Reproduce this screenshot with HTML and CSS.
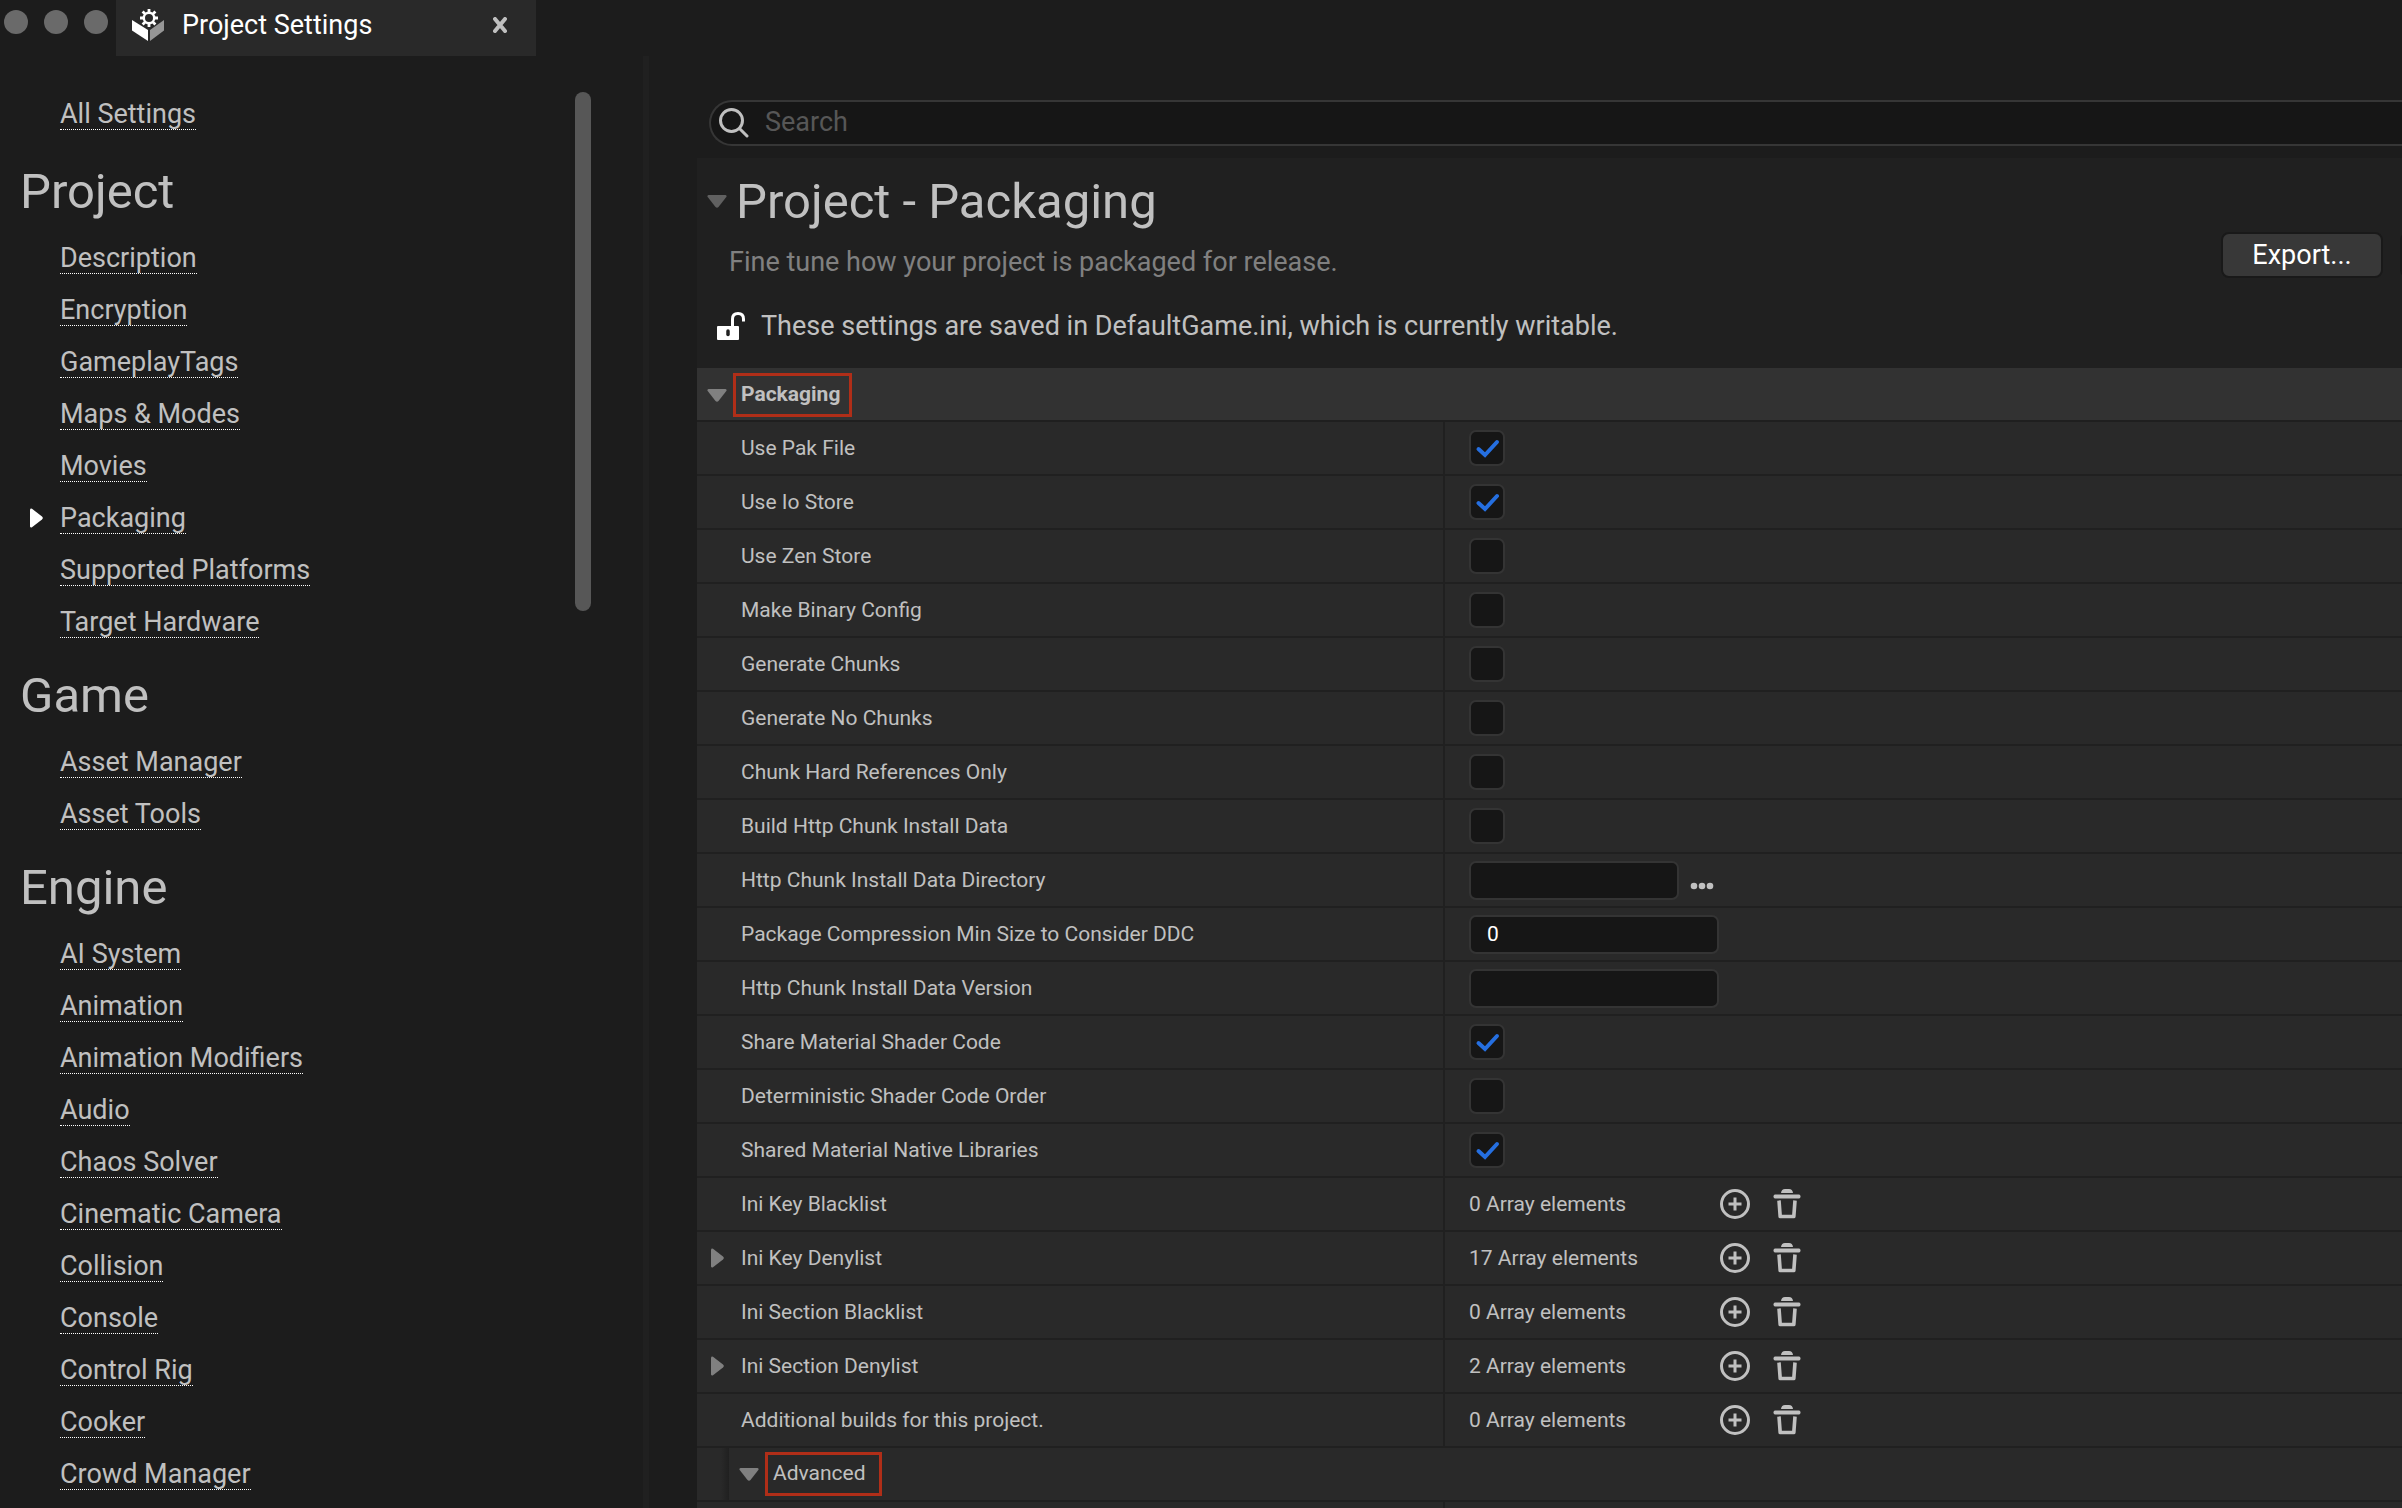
FILE: index.html
```html
<!DOCTYPE html>
<html lang="en">
<head>
<meta charset="utf-8">
<title>Project Settings</title>
<link rel="stylesheet" href="styles.css">
</head>
<body>
<svg class="defs" aria-hidden="true">
  <symbol id="down" viewBox="0 0 20 13"><path d="M1.500 0h17q1.700 0.500 0.800 2l-7.800 10q-1.500 1.600-3 0l-7.800-10q-0.900-1.500 0.800-2z"/></symbol>
  <symbol id="right" viewBox="0 0 13 20"><path d="M0 1.500v17q0.500 1.700 2 0.800l10-7.800q1.600-1.500 0-3l-10-7.800q-1.500-0.900-2 0.800z"/></symbol>
  <symbol id="plus" viewBox="0 0 30 30"><g fill="none" stroke="currentColor" stroke-width="3"><circle cx="15" cy="15" r="13.500"/><path d="M15 8.500v13M8.500 15h13"/></g></symbol>
  <symbol id="trash" viewBox="0 0 30 30"><path d="M9 4q0.500-4 4-4h4q3.500 0 4 4z"/><path d="M3 5.500h24q1.500 0 1.500 2t-1.500 2h-24q-1.500 0-1.500-2t1.500-2z"/><path d="M7 11.500l1.200 16h13.600l1.200-16" fill="none" stroke="currentColor" stroke-width="3.600" stroke-linejoin="round"/></symbol>
</svg>

<header class="titlebar">
  <div class="lights"><span></span><span></span><span></span></div>
  <div class="tab">
    <svg class="tab-icon" viewBox="0 0 32 40">
      <path d="M0 15l16 10v11l-16-10.500z" fill="#fff"/>
      <path d="M32 15l-14 10v11l14-10.500z" fill="#969696"/>
      <circle cx="17" cy="13" r="5.200" fill="none" stroke="#fff" stroke-width="2.400"/>
      <g stroke="#fff" stroke-width="2.800"><path d="M17 4v3.500M17 18.500v3.500M8 13h3.500M22.500 13h3.500M10.600 6.600l2.500 2.500M20.900 16.900l2.500 2.500M10.600 19.400l2.500-2.500M20.900 9.100l2.500-2.500"/></g>
    </svg>
    <span class="tab-title">Project Settings</span>
    <button class="close" aria-label="Close tab"><svg viewBox="0 0 14 16"><path d="M2 2l10 12M12 2l-10 12"/></svg></button>
  </div>
</header>

<div class="window">
  <nav class="sidebar" aria-label="Settings sections">
    <div class="sections">
      <ul class="all"><li><a href="#">All Settings</a></li></ul>
      <h2>Project</h2>
      <ul>
        <li><a href="#">Description</a></li>
        <li><a href="#">Encryption</a></li>
        <li><a href="#">GameplayTags</a></li>
        <li><a href="#">Maps &amp; Modes</a></li>
        <li><a href="#">Movies</a></li>
        <li class="current"><svg class="marker"><use href="#right"/></svg><a href="#" aria-current="page">Packaging</a></li>
        <li><a href="#">Supported Platforms</a></li>
        <li><a href="#">Target Hardware</a></li>
      </ul>
      <h2>Game</h2>
      <ul>
        <li><a href="#">Asset Manager</a></li>
        <li><a href="#">Asset Tools</a></li>
      </ul>
      <h2>Engine</h2>
      <ul>
        <li><a href="#">AI System</a></li>
        <li><a href="#">Animation</a></li>
        <li><a href="#">Animation Modifiers</a></li>
        <li><a href="#">Audio</a></li>
        <li><a href="#">Chaos Solver</a></li>
        <li><a href="#">Cinematic Camera</a></li>
        <li><a href="#">Collision</a></li>
        <li><a href="#">Console</a></li>
        <li><a href="#">Control Rig</a></li>
        <li><a href="#">Cooker</a></li>
        <li><a href="#">Crowd Manager</a></li>
      </ul>
    </div>
    <div class="scrollbar"><div class="thumb"></div></div>
  </nav>

  <main class="content">
    <label class="search">
      <svg viewBox="0 0 30 30"><circle cx="12.500" cy="12.500" r="11"/><path d="M20.500 20.500l7.500 7.500"/></svg>
      <input type="search" placeholder="Search" aria-label="Search">
    </label>

    <section class="panel">
      <div class="intro">
        <div class="heading">
          <h1><svg class="arrow dim"><use href="#down"/></svg>Project - Packaging</h1>
          <p class="summary">Fine tune how your project is packaged for release.</p>
        </div>
        <div class="actions"><button class="btn">Export...</button><button class="btn" aria-label="Import"></button></div>
      </div>
      <p class="status">
        <svg class="lock" viewBox="0 0 28 28"><path d="M1 14h20q1 0 1 1v12q0 1-1 1h-20q-1 0-1-1v-12q0-1 1-1z" fill="#fff"/><path d="M11 19v3.500" stroke="#202020" stroke-width="3.500" stroke-linecap="round"/><path d="M15.500 15v-8q0-5.500 5.500-5.500t5.500 5.500v2.500" fill="none" stroke="#fff" stroke-width="3"/></svg>
        These settings are saved in DefaultGame.ini, which is currently writable.
      </p>

      <h3 class="group"><svg class="arrow"><use href="#down"/></svg><span class="mark">Packaging</span></h3>
      <div class="row"><div class="name"><label for="f1">Use Pak File</label></div><div class="value"><input type="checkbox" id="f1" checked></div></div>
      <div class="row"><div class="name"><label for="f2">Use Io Store</label></div><div class="value"><input type="checkbox" id="f2" checked></div></div>
      <div class="row"><div class="name"><label for="f3">Use Zen Store</label></div><div class="value"><input type="checkbox" id="f3"></div></div>
      <div class="row"><div class="name"><label for="f4">Make Binary Config</label></div><div class="value"><input type="checkbox" id="f4"></div></div>
      <div class="row"><div class="name"><label for="f5">Generate Chunks</label></div><div class="value"><input type="checkbox" id="f5"></div></div>
      <div class="row"><div class="name"><label for="f6">Generate No Chunks</label></div><div class="value"><input type="checkbox" id="f6"></div></div>
      <div class="row"><div class="name"><label for="f7">Chunk Hard References Only</label></div><div class="value"><input type="checkbox" id="f7"></div></div>
      <div class="row"><div class="name"><label for="f8">Build Http Chunk Install Data</label></div><div class="value"><input type="checkbox" id="f8"></div></div>
      <div class="row"><div class="name"><label for="f9">Http Chunk Install Data Directory</label></div><div class="value"><input type="text" class="short" id="f9"><button class="browse" aria-label="Browse"><svg viewBox="0 0 24 8"><circle cx="4" cy="4" r="3.300"/><circle cx="12" cy="4" r="3.300"/><circle cx="20" cy="4" r="3.300"/></svg></button></div></div>
      <div class="row"><div class="name"><label for="f10">Package Compression Min Size to Consider DDC</label></div><div class="value"><input type="text" id="f10" value="0"></div></div>
      <div class="row"><div class="name"><label for="f11">Http Chunk Install Data Version</label></div><div class="value"><input type="text" id="f11"></div></div>
      <div class="row"><div class="name"><label for="f12">Share Material Shader Code</label></div><div class="value"><input type="checkbox" id="f12" checked></div></div>
      <div class="row"><div class="name"><label for="f13">Deterministic Shader Code Order</label></div><div class="value"><input type="checkbox" id="f13"></div></div>
      <div class="row"><div class="name"><label for="f14">Shared Material Native Libraries</label></div><div class="value"><input type="checkbox" id="f14" checked></div></div>
      <div class="row"><div class="name">Ini Key Blacklist</div><div class="value"><span class="count">0 Array elements</span><button class="tool" aria-label="Add element"><svg><use href="#plus"/></svg></button><button class="tool" aria-label="Remove all"><svg><use href="#trash"/></svg></button></div></div>
      <div class="row"><div class="name"><svg class="expand"><use href="#right"/></svg>Ini Key Denylist</div><div class="value"><span class="count">17 Array elements</span><button class="tool" aria-label="Add element"><svg><use href="#plus"/></svg></button><button class="tool" aria-label="Remove all"><svg><use href="#trash"/></svg></button></div></div>
      <div class="row"><div class="name">Ini Section Blacklist</div><div class="value"><span class="count">0 Array elements</span><button class="tool" aria-label="Add element"><svg><use href="#plus"/></svg></button><button class="tool" aria-label="Remove all"><svg><use href="#trash"/></svg></button></div></div>
      <div class="row"><div class="name"><svg class="expand"><use href="#right"/></svg>Ini Section Denylist</div><div class="value"><span class="count">2 Array elements</span><button class="tool" aria-label="Add element"><svg><use href="#plus"/></svg></button><button class="tool" aria-label="Remove all"><svg><use href="#trash"/></svg></button></div></div>
      <div class="row"><div class="name">Additional builds for this project.</div><div class="value"><span class="count">0 Array elements</span><button class="tool" aria-label="Add element"><svg><use href="#plus"/></svg></button><button class="tool" aria-label="Remove all"><svg><use href="#trash"/></svg></button></div></div>
      <h4 class="subgroup"><svg class="arrow"><use href="#down"/></svg><span class="mark">Advanced</span></h4>
      <div class="row"><div class="name"></div><div class="value"></div></div>
    </section>
  </main>
</div>
</body>
</html>
```
FILE: styles.css
```css
* { box-sizing: border-box; margin: 0; padding: 0; }
html, body { height: 100%; }
body {
  display: flex;
  flex-direction: column;
  overflow: hidden;
  background: #1c1c1c;
  color: #c0c0c0;
  font-family: Roboto, "Liberation Sans", sans-serif;
  font-size: 21px;
}
.defs { display: none; }
button { border: 0; background: none; color: inherit; font: inherit; }
svg { display: block; flex: none; fill: currentColor; }
ul { list-style: none; }

.titlebar { display: flex; flex: none; height: 56px; }
.lights { display: flex; gap: 16px; padding: 10px 8px 0 4px; }
.lights span { width: 24px; height: 24px; border-radius: 50%; background: #6a6a6a; }
.tab { display: flex; align-items: center; width: 420px; padding: 0 29px 6px 16px; background: #292929; }
.tab-icon { width: 32px; height: 40px; }
.tab-title { flex: 1; padding-left: 18px; color: #fff; font-size: 27px; }
.close svg { width: 14px; height: 16px; fill: none; stroke: #c0c0c0; stroke-width: 4; stroke-linecap: round; }

.window { display: flex; flex: 1; min-height: 0; }
.sidebar { display: flex; flex: none; width: 649px; border-right: 6px solid #202020; overflow: hidden; }
.sections { flex: 1; padding-top: 32px; }
.sections li { position: relative; height: 52px; padding: 8px 0 0 60px; }
.sections a {
  display: inline-block;
  padding-top: 4px;
  border-bottom: 1px dotted #fff;
  color: #c0c0c0;
  font-size: 27px;
  line-height: 29px;
  text-decoration: none;
}
.sections h2 { height: 88px; padding: 20px 0 0 20px; font-size: 49px; font-weight: 400; line-height: 56px; }
.all { margin-bottom: 4px; }
.marker { position: absolute; left: 30px; top: 16px; width: 13px; height: 20px; color: #fff; }
.scrollbar { flex: none; width: 68px; padding-top: 36px; }
.thumb { width: 16px; height: 519px; border-radius: 8px; background: #575757; }

.content { display: flex; flex: 1; flex-direction: column; min-width: 0; padding: 44px 0 0 48px; overflow: hidden; }
.search {
  display: flex;
  flex: none;
  align-items: center;
  gap: 16px;
  height: 46px;
  margin-left: 12px;
  padding-left: 8px;
  border: 2px solid #363636;
  border-right: 0;
  border-radius: 23px 0 0 23px;
  background: #161616;
}
.search svg { width: 30px; height: 30px; fill: none; stroke: #c0c0c0; stroke-width: 3; stroke-linecap: round; }
.search input { flex: 1; padding-bottom: 3px; border: 0; outline: 0; background: none; color: #c0c0c0; font: 27px Roboto, sans-serif; }
.search input::placeholder { color: #575757; }

.panel { flex: none; margin-top: 12px; background: #202020; }
.intro { display: flex; }
.heading { flex: 1; }
h1 { display: flex; align-items: center; gap: 9px; height: 84px; padding: 3px 0 0 10px; font-size: 49px; font-weight: 400; }
.arrow { width: 20px; height: 13px; color: #808080; }
.dim { color: #606060; }
.summary { padding-left: 32px; color: #808080; font-size: 27px; line-height: 40px; }
.actions { display: flex; flex: none; gap: 17px; width: 181px; padding-top: 74px; overflow: hidden; }
.btn {
  flex: none;
  width: 162px;
  height: 46px;
  border: 2px solid #191919;
  border-radius: 8px;
  background: #383838;
  color: #fff;
  font-size: 27px;
}
.status { display: flex; align-items: center; gap: 16px; height: 86px; padding: 1px 0 0 20px; font-size: 27px; }
.lock { width: 28px; height: 28px; }

.group {
  display: flex;
  align-items: center;
  gap: 6px;
  height: 54px;
  padding: 2px 0 0 10px;
  border-bottom: 2px solid #1f1f1f;
  background: #323232;
  font-size: 21px;
}
.mark { height: 44px; padding: 0 9px 0 5px; border: 3px solid #b02e18; line-height: 36px; }
.row { display: grid; grid-template-columns: 748px 1fr; height: 54px; background: #292929; }
.name, .value { display: flex; align-items: center; border-bottom: 2px solid #202020; }
.name { position: relative; padding-left: 44px; border-right: 2px solid #202020; }
.value { padding-left: 24px; }
.expand { position: absolute; left: 14px; top: 16px; width: 13px; height: 20px; color: #808080; }
.value input { appearance: none; border: 2px solid #343434; border-radius: 7px; outline: 0; background: #161616; }
.value input[type="text"] { width: 250px; height: 39px; padding: 0 16px; color: #fff; font: 21px Roboto, sans-serif; }
.value input.short[type="text"] { width: 210px; }
.value input[type="checkbox"] { width: 36px; height: 36px; }
.value input:checked {
  background: #161616 url('data:image/svg+xml,<svg xmlns="http://www.w3.org/2000/svg" viewBox="0 0 32 32"><path d="M7.500 17l6.500 6 12-13" fill="none" stroke="%23256fe0" stroke-width="4" stroke-linecap="round"/></svg>') center / 32px 32px no-repeat;
}
.browse { padding: 12px 0 0 11px; }
.browse svg { width: 24px; height: 8px; }
.count { width: 251px; }
.tool { width: 52px; }
.tool svg { width: 30px; height: 30px; }

.subgroup {
  display: flex;
  align-items: center;
  gap: 6px;
  height: 54px;
  padding-left: 42px;
  border-bottom: 2px solid #202020;
  background: linear-gradient(90deg, #292929 24px, #202020 32px, #292929 32px);
  font-weight: 400;
}
.subgroup .mark { padding-right: 13px; }
```
